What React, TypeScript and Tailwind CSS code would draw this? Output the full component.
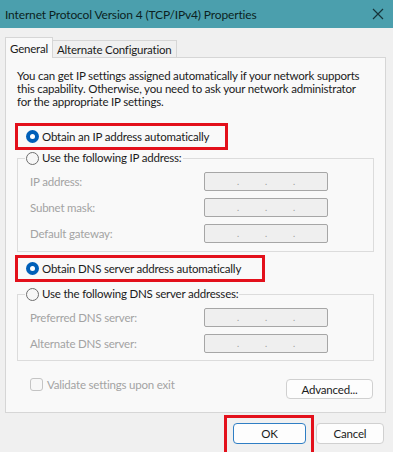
import React from "react";

const font = { fontFamily: 'Lato, "Noto Sans", sans-serif' };

function Radio({ checked }: { checked?: boolean }) {
  if (checked) {
    return (
      <span className="flex h-[13px] w-[13px] shrink-0 items-center justify-center rounded-full bg-[#005fb8]">
        <span className="h-[5px] w-[5px] rounded-full bg-white" />
      </span>
    );
  }
  return <span className="h-[13px] w-[13px] shrink-0 rounded-full border border-[#6e6e6e] bg-[#f7f7f7]" />;
}

function IpBox() {
  return (
    <div className="flex h-[19px] w-[124px] items-end justify-center gap-[26px] rounded-[2px] border border-[#a6a6a6] bg-[#efefef] pb-[4px] text-[9px] leading-[9px] text-[#9a9a9a]">
      <span>.</span>
      <span>.</span>
      <span>.</span>
    </div>
  );
}

function Row({ label }: { label: string }) {
  return (
    <div className="flex items-center">
      <span className="w-[186px] pl-[12px] text-[#a3a3a3]">{label}</span>
      <IpBox />
    </div>
  );
}

export default function App() {
  return (
    <div
      className="flex h-[452px] w-[393px] flex-col overflow-hidden whitespace-nowrap bg-[#f0f0f0] text-[11.5px] leading-[13px] tracking-[-0.2px] text-[#1b1b1b]"
      style={font}
    >
      {/* title bar */}
      <div className="flex h-[28px] shrink-0 items-center justify-between bg-[#4b9fad] pl-[5px] pr-[9px]">
        <span className="text-[12px] tracking-[-0.15px] text-[#0c1f22]">Internet Protocol Version 4 (TCP/IPv4) Properties</span>
        <svg width="12" height="12" viewBox="0 0 12 12" className="text-[#15343a]">
          <path d="M1 1L11 11M11 1L1 11" stroke="currentColor" strokeWidth="1.2" />
        </svg>
      </div>

      {/* tabs */}
      <div className="mt-[9px] flex items-end pl-[5px]">
        <div className="relative z-10 -mb-px flex h-[21px] items-start border border-b-0 border-[#d6d6d6] bg-[#f9f9f9] px-[4px] pt-[4px]">
          General
        </div>
        <div className="flex h-[17px] items-start border border-b-0 border-l-0 border-[#d6d6d6] bg-[#f0f0f0] px-[4px] pt-[2px]">
          Alternate Configuration
        </div>
      </div>

      {/* panel */}
      <div className="ml-[5px] flex h-[356px] w-[381px] shrink-0 flex-col border border-[#d6d6d6] bg-[#f9f9f9] pt-[11px]">
        <p className="pl-[11px]">
          You can get IP settings assigned automatically if your network supports
          <br />
          this capability. Otherwise, you need to ask your network administrator
          <br />
          for the appropriate IP settings.
        </p>

        <div className="ml-[9px] mt-[15px] flex h-[27px] w-[213px] items-center gap-[3px] border-[3px] border-[#e3101b] pl-[8px]">
          <Radio checked />
          <span>Obtain an IP address automatically</span>
        </div>

        <fieldset className="ml-[11px] w-[357px] border border-[#dcdcdc] pb-[8px]">
          <legend className="ml-[7px] flex items-center gap-[3px] px-[1px] leading-[16px]">
            <Radio />
            <span>Use the following IP address:</span>
          </legend>
          <div className="mt-[6px] flex flex-col gap-[7px]">
            <Row label="IP address:" />
            <Row label="Subnet mask:" />
            <Row label="Default gateway:" />
          </div>
        </fieldset>

        <div className="ml-[9px] mt-[3px] flex h-[27px] w-[250px] items-center gap-[3px] border-[3px] border-[#e3101b] pl-[8px]">
          <Radio checked />
          <span>Obtain DNS server address automatically</span>
        </div>

        <fieldset className="ml-[11px] mt-[4px] w-[357px] border border-[#dcdcdc] pb-[7px]">
          <legend className="ml-[7px] flex items-center gap-[3px] px-[1px] leading-[16px]">
            <Radio />
            <span>Use the following DNS server addresses:</span>
          </legend>
          <div className="mt-[6px] flex flex-col gap-[7px]">
            <Row label="Preferred DNS server:" />
            <Row label="Alternate DNS server:" />
          </div>
        </fieldset>

        <div className="mt-[17px] flex items-start justify-between pl-[24px] pr-[12px]">
          <div className="flex items-center gap-[4px] text-[#a3a3a3]">
            <span className="h-[13px] w-[13px] rounded-[3px] border border-[#c4c4c4] bg-[#f7f7f7]" />
            <span>Validate settings upon exit</span>
          </div>
          <div className="mt-[1px] flex h-[20px] w-[87px] items-center justify-center rounded-[4px] border border-[#d0d0d0] bg-[#fdfdfd]">
            Advanced...
          </div>
        </div>
      </div>

      {/* buttons */}
      <div className="mt-[2px] flex items-start justify-end pr-[9px]">
        <div className="h-[45px] w-[90px] border-[3px] border-[#e3101b] pl-[6px] pr-[5px] pt-[5px]">
          <div className="flex h-[21px] items-center justify-center rounded-[4px] border border-[#2f7ec4] bg-[#fdfdfd]">
            OK
          </div>
        </div>
        <div className="ml-[2px] mt-[8px] flex h-[21px] w-[68px] items-center justify-center rounded-[4px] border border-[#d0d0d0] bg-[#fdfdfd]">
          Cancel
        </div>
      </div>
    </div>
  );
}
